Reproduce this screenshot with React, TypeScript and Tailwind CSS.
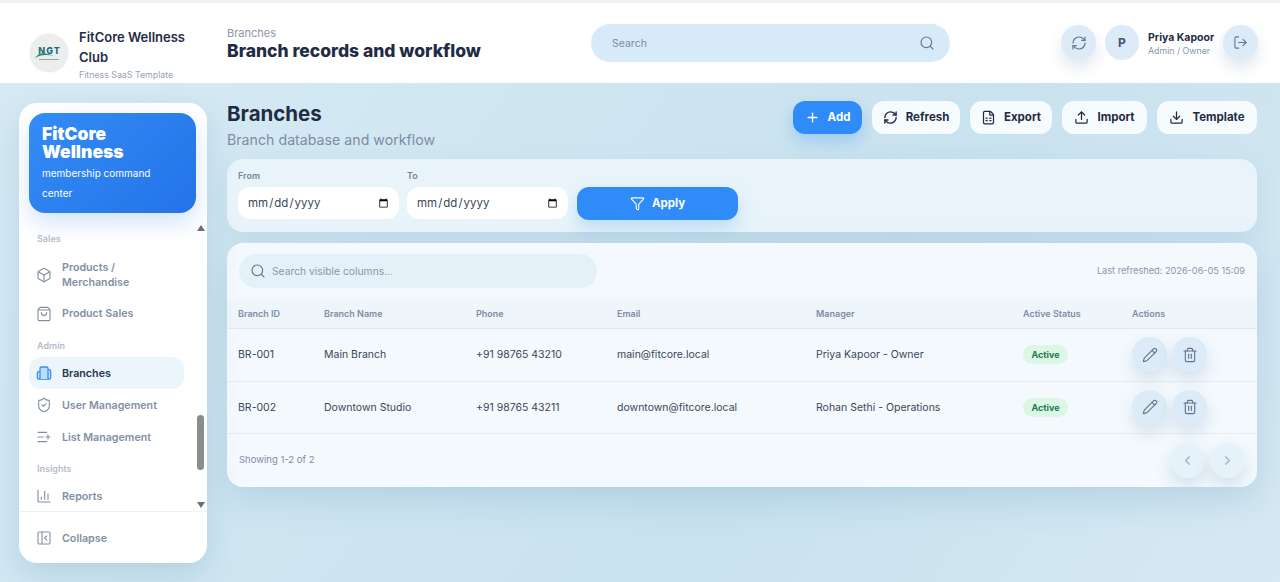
import {
  Box,
  Building2,
  ChartColumn,
  ChevronLeft,
  ChevronRight,
  Download,
  FileSpreadsheet,
  Funnel,
  ListPlus,
  LogOut,
  PanelLeftClose,
  Pencil,
  Plus,
  RefreshCw,
  Search,
  ShieldCheck,
  ShoppingBag,
  Trash2,
  Upload,
} from "lucide-react";
import type { ReactNode } from "react";

const font = "font-['Inter','Noto_Sans',sans-serif]";
const rowGrid = "grid grid-cols-[86px_152px_141px_199px_207px_109px_1fr] items-center pl-[11px]";
const navIcon = "h-[16px] w-[16px] shrink-0";
const toolIcon = "h-[15px] w-[15px]";

const branches = [
  {
    id: "BR-001",
    name: "Main Branch",
    phone: "+91 98765 43210",
    email: "main@fitcore.local",
    manager: "Priya Kapoor - Owner",
  },
  {
    id: "BR-002",
    name: "Downtown Studio",
    phone: "+91 98765 43211",
    email: "downtown@fitcore.local",
    manager: "Rohan Sethi - Operations",
  },
];

function NavItem({ icon, label, active }: { icon: ReactNode; label: ReactNode; active?: boolean }) {
  return (
    <div
      className={`flex w-[155px] items-center gap-[10px] rounded-[12px] px-[7px] py-[8px] text-[10.7px] font-semibold leading-[15px] ${
        active ? "bg-[#ebf5fc] text-[#26334d]" : "text-[#8290a6]"
      }`}
    >
      {icon}
      <span>{label}</span>
    </div>
  );
}

function SectionLabel({ children, className }: { children: string; className: string }) {
  return <div className={`pl-[8px] text-[9px] font-semibold leading-[12px] text-[#b3bccb] ${className}`}>{children}</div>;
}

function ToolButton({ icon, label, className }: { icon: ReactNode; label: string; className: string }) {
  return (
    <button
      type="button"
      className={`flex h-[33px] items-center justify-center gap-[8px] rounded-[12px] bg-[#f6fbfe] text-[11.5px] font-bold text-[#1f2c44] ${className}`}
    >
      {icon}
      {label}
    </button>
  );
}

function RoundButton({ children, className = "" }: { children: ReactNode; className?: string }) {
  return (
    <button
      type="button"
      className={`flex h-[35px] w-[35px] items-center justify-center rounded-full bg-[#dcebf7] text-[#66758c] shadow-[0_8px_16px_rgba(90,130,170,0.2)] ${className}`}
    >
      {children}
    </button>
  );
}

function DateField({ label }: { label: string }) {
  return (
    <label className="flex flex-col gap-[5px]">
      <span className="text-[9px] font-semibold leading-[12px] text-[#76859b]">{label}</span>
      <input
        type="date"
        className="h-[32px] w-[161px] rounded-[12px] bg-white pl-[9px] pr-[8px] pt-[1px] text-[11.5px] text-[#3b465a] outline-none"
      />
    </label>
  );
}

export default function App() {
  return (
    <div className={`flex h-[582px] w-[1280px] flex-col overflow-hidden ${font}`}>
      <div className="h-[3px] bg-[#f0f1f3]" />
      <header className="flex h-[80px] shrink-0 bg-white">
        <div className="flex w-[227px] shrink-0 items-start pl-[30px]">
          <div className="mt-[31px] flex h-[38px] w-[38px] shrink-0 flex-col items-center justify-center rounded-full bg-[#eceeee] shadow-[0_0_2px_rgba(0,0,0,0.12)]">
            <svg viewBox="0 0 38 16" className="h-[16px] w-[38px]">
              <text x="19.5" y="9" textAnchor="middle" fontSize="9" fontWeight="800" letterSpacing="1" fill="#1f6f78">
                NGT
              </text>
              <path d="M5 13 C10 6 15 8 24 10.5 C18 10 12 9 5 13 Z" fill="#2f8f6f" />
              <path d="M9 14.5 H29" stroke="#8a9099" strokeWidth="0.8" />
            </svg>
          </div>
          <div className="ml-[11px] pt-[24px]">
            <div className="text-[13px] font-semibold leading-[20px] text-[#1f2c44]">
              FitCore Wellness
              <br />
              Club
            </div>
            <div className="mt-[2px] text-[8.8px] leading-[12px] text-[#98a3b5]">Fitness SaaS Template</div>
          </div>
        </div>
        <div className="w-[364px] shrink-0 pt-[23px]">
          <div className="text-[11px] leading-[14px] text-[#8b97aa]">Branches</div>
          <div className="text-[17.5px] font-extrabold leading-[22px] text-[#1f2c44]">Branch records and workflow</div>
        </div>
        <div className="mt-[21px] flex h-[38px] w-[359px] shrink-0 items-center justify-between self-start rounded-full bg-[#d7eaf7] pl-[21px] pr-[15px]">
          <span className="pt-[1px] text-[10.5px] text-[#7f8ca3]">Search</span>
          <Search className="h-[16px] w-[16px] text-[#66758c]" strokeWidth={1.7} />
        </div>
        <div className="ml-[111px] mt-[22px] flex items-start">
          <RoundButton>
            <RefreshCw className="h-[16px] w-[16px]" strokeWidth={1.8} />
          </RoundButton>
          <div className="ml-[9px] flex h-[35px] w-[34px] items-center justify-center rounded-full bg-[#dcebf7] text-[12px] font-bold text-[#3f5270]">
            P
          </div>
          <div className="ml-[9px] w-[75px] pt-[6px]">
            <div className="whitespace-nowrap text-[10.5px] font-bold leading-[14px] text-[#1f2c44]">Priya Kapoor</div>
            <div className="text-[8.8px] leading-[11px] text-[#8b97aa]">Admin / Owner</div>
          </div>
          <RoundButton>
            <LogOut className="h-[15px] w-[15px]" strokeWidth={1.7} />
          </RoundButton>
        </div>
      </header>

      <div className="flex min-h-0 flex-1 bg-[linear-gradient(125deg,#d6eaf4_0%,#cfe6f1_35%,#c8e2ee_62%,#d6e9f3_100%)] pl-[19px] pr-[23px] pt-[20px]">
        <aside className="relative flex h-[460px] w-[188px] shrink-0 flex-col overflow-hidden rounded-[18px] bg-white shadow-[0_12px_30px_rgba(80,135,175,0.22)]">
          <div className="ml-[10px] mr-[11px] mt-[10px] h-[100px] shrink-0 rounded-[16px] bg-[linear-gradient(135deg,#338cf5,#2473e8)] pl-[13px] pt-[12px] text-white shadow-[0_10px_22px_rgba(60,130,235,0.22)]">
            <div className="text-[17.5px] font-black leading-[18px]">
              FitCore
              <br />
              Wellness
            </div>
            <div className="mt-[2px] text-[10px] leading-[20px]">
              membership command
              <br />
              center
            </div>
          </div>
          <nav className="flex-1 overflow-hidden pl-[10px] pt-[20px]">
            <SectionLabel className="mb-[6.5px]">Sales</SectionLabel>
            <NavItem
              icon={<Box className={navIcon} strokeWidth={1.7} />}
              label={
                <>
                  Products /
                  <br />
                  Merchandise
                </>
              }
            />
            <NavItem icon={<ShoppingBag className={navIcon} strokeWidth={1.7} />} label="Product Sales" />
            <SectionLabel className="mb-[5px] mt-[10.5px]">Admin</SectionLabel>
            <NavItem active icon={<Building2 className={`${navIcon} fill-[#bcdcfb] text-[#3b8df0]`} strokeWidth={1.9} />} label="Branches" />
            <NavItem icon={<ShieldCheck className={navIcon} strokeWidth={1.7} />} label="User Management" />
            <NavItem icon={<ListPlus className={navIcon} strokeWidth={1.7} />} label="List Management" />
            <SectionLabel className="mb-[5px] mt-[10px]">Insights</SectionLabel>
            <NavItem icon={<ChartColumn className={navIcon} strokeWidth={1.7} />} label="Reports" />
          </nav>
          <div className="h-[52px] shrink-0 border-t border-[#eef2f6] pl-[10px] pt-[10px]">
            <NavItem icon={<PanelLeftClose className={navIcon} strokeWidth={1.7} />} label="Collapse" />
          </div>
          {/* fake native scrollbar, sits over the nav */}
          <div className="absolute right-[3px] top-[122px] h-[283px] w-[7px]">
            <div className="absolute left-0 top-0 h-0 w-0 border-x-[4px] border-b-[6px] border-x-transparent border-b-[#6e6e6e]" />
            <div className="absolute left-0 top-[190px] h-[55px] w-[7px] rounded-full bg-[#8c8c8c]" />
            <div className="absolute bottom-0 left-0 h-0 w-0 border-x-[4px] border-t-[6px] border-x-transparent border-t-[#6e6e6e]" />
          </div>
        </aside>

        <main className="ml-[20px] min-w-0 flex-1">
          <div className="flex h-[56px] items-start justify-between">
            <div>
              <div className="-mt-[1px] text-[20.5px] font-bold leading-[24px] text-[#1f2c44]">Branches</div>
              <div className="mt-[4px] text-[14.2px] leading-[20px] text-[#7f8ca3]">Branch database and workflow</div>
            </div>
            <div className="-mt-[2px] flex gap-[10px]">
              <button
                type="button"
                className="flex h-[33px] w-[69px] items-center justify-center gap-[8px] rounded-[12px] bg-[#2f8bf8] text-[11.5px] font-bold text-white shadow-[0_8px_16px_rgba(47,139,248,0.28)]"
              >
                <Plus className={toolIcon} strokeWidth={2.2} />
                Add
              </button>
              <ToolButton className="w-[88px]" icon={<RefreshCw className={toolIcon} strokeWidth={2.2} />} label="Refresh" />
              <ToolButton className="w-[82px]" icon={<FileSpreadsheet className={toolIcon} strokeWidth={2} />} label="Export" />
              <ToolButton className="w-[85px]" icon={<Upload className={toolIcon} strokeWidth={2} />} label="Import" />
              <ToolButton className="w-[100px]" icon={<Download className={toolIcon} strokeWidth={2} />} label="Template" />
            </div>
          </div>

          <section className="flex h-[73px] items-end gap-[8px] rounded-[16px] bg-[#e8f4fa] px-[11px] pb-[13px] shadow-[0_8px_24px_rgba(80,135,175,0.12)]">
            <DateField label="From" />
            <DateField label="To" />
            <button
              type="button"
              className="mb-[-1px] ml-[1px] flex h-[33px] w-[161px] items-center justify-center gap-[7px] rounded-[12px] bg-[#2f8bf8] text-[11.5px] font-bold text-white shadow-[0_8px_16px_rgba(47,139,248,0.22)]"
            >
              <Funnel className="h-[15px] w-[15px]" strokeWidth={1.7} />
              Apply
            </button>
          </section>

          <section className="mt-[11px] h-[244px] overflow-hidden rounded-[16px] bg-[#f3f9fd] shadow-[0_12px_34px_rgba(80,135,175,0.22)]">
            <div className="flex h-[56px] items-start justify-between px-[12px] pt-[11px]">
              <div className="flex h-[34px] w-[358px] items-center gap-[6px] rounded-full bg-[#e4f1f9] pl-[11px]">
                <Search className="h-[16px] w-[16px] text-[#66758c]" strokeWidth={1.7} />
                <span className="pt-[1px] text-[10.3px] text-[#8b97aa]">Search visible columns...</span>
              </div>
              <div className="pt-[11px] text-[9.2px] leading-[12px] text-[#8b97aa]">Last refreshed: 2026-06-05 15:09</div>
            </div>
            <div className={`${rowGrid} h-[30px] border-b border-[#dfe8ef] bg-[#eef6fc] text-[9px] font-semibold text-[#7f8ca3]`}>
              <div>Branch ID</div>
              <div>Branch Name</div>
              <div>Phone</div>
              <div>Email</div>
              <div>Manager</div>
              <div>Active Status</div>
              <div>Actions</div>
            </div>
            {branches.map((b) => (
              <div key={b.id} className={`${rowGrid} h-[52.5px] border-b border-[#e4ecf2] pt-[1px] text-[10.5px] text-[#3b465a]`}>
                <div>{b.id}</div>
                <div>{b.name}</div>
                <div>{b.phone}</div>
                <div>{b.email}</div>
                <div>{b.manager}</div>
                <div className="-mt-[1px]">
                  <span className="inline-flex h-[19px] w-[45px] items-center justify-center rounded-full bg-[#dcf7e6] text-[9px] font-bold text-[#1d7a4d]">
                    Active
                  </span>
                </div>
                <div className="-mt-[1px] flex gap-[5px]">
                  <RoundButton>
                    <Pencil className="h-[16px] w-[16px]" strokeWidth={1.7} />
                  </RoundButton>
                  <RoundButton>
                    <Trash2 className="h-[16px] w-[16px]" strokeWidth={1.7} />
                  </RoundButton>
                </div>
              </div>
            ))}
            <div className="flex items-start justify-between px-[12px] pt-[9px]">
              <div className="pt-[11px] text-[9.5px] leading-[12px] text-[#7f8ca3]">Showing 1-2 of 2</div>
              <div className="flex gap-[5px]">
                <RoundButton className="!bg-[#e6f2fa] !text-[#a3b1c2]">
                  <ChevronLeft className="h-[15px] w-[15px]" />
                </RoundButton>
                <RoundButton className="!bg-[#e6f2fa] !text-[#a3b1c2]">
                  <ChevronRight className="h-[15px] w-[15px]" />
                </RoundButton>
              </div>
            </div>
          </section>
        </main>
      </div>
    </div>
  );
}
